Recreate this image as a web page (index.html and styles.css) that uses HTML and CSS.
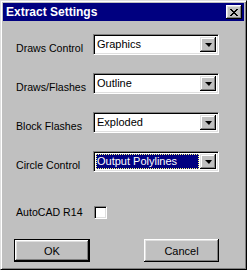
FILE: index.html
```html
<!DOCTYPE html>
<html>
<head>
    <title>Extract Settings</title>
    <link rel="stylesheet" href="styles.css">
</head>
<body>
    <div class="window">
        <div class="titlebar">
            <span class="title">Extract Settings</span>
            <div class="close">
                <svg width="8" height="7" viewBox="0 0 8 7">
                    <path d="M0 0h2v1h1v1h2v-1h1v-1h2v1h-1v1h-1v1h-1v1h1v1h1v1h1v1h-2v-1h-1v-1h-2v1h-1v1h-2v-1h1v-1h1v-1h1v-1h-1v-1h-1v-1h-1z" fill="#000"/>
                </svg>
            </div>
        </div>

        <div class="content">
            <div class="field">
                <span class="label">Draws Control</span>
                <div class="combo">
                    <div class="combo-value">Graphics</div>
                    <div class="combo-btn"><span class="arrow"></span></div>
                </div>
            </div>

            <div class="field">
                <span class="label">Draws/Flashes</span>
                <div class="combo">
                    <div class="combo-value">Outline</div>
                    <div class="combo-btn"><span class="arrow"></span></div>
                </div>
            </div>

            <div class="field">
                <span class="label">Block Flashes</span>
                <div class="combo">
                    <div class="combo-value">Exploded</div>
                    <div class="combo-btn"><span class="arrow"></span></div>
                </div>
            </div>

            <div class="field">
                <span class="label">Circle Control</span>
                <div class="combo">
                    <div class="combo-value focused">Output Polylines</div>
                    <div class="combo-btn"><span class="arrow"></span></div>
                </div>
            </div>

            <div class="check-row">
                <span class="label">AutoCAD R14</span>
                <span class="checkbox"></span>
            </div>

            <div class="buttons">
                <div class="btn default">OK</div>
                <div class="btn">Cancel</div>
            </div>
        </div>
    </div>
</body>
</html>
```

FILE: styles.css
```css
* {
    box-sizing: border-box;
}

body {
    margin: 0;
    font-family: 'Liberation Sans', Arial, sans-serif;
    font-size: 11px;
    color: #000;
    background: #c0c0c0;
}

.window {
    width: 247px;
    height: 270px;
    padding: 2px;
    background: #c0c0c0;
    border: 1px solid;
    border-color: #dfdfdf #000 #000 #dfdfdf;
    box-shadow: inset 1px 1px #fff, inset -1px -1px #808080;
}

.titlebar {
    height: 18px;
    background: #000080;
    display: flex;
    align-items: center;
    justify-content: space-between;
    padding: 0 2px 0 3px;
}

.title {
    color: #fff;
    font-weight: bold;
    font-size: 12px;
    line-height: 14px;
}

.close {
    width: 16px;
    height: 14px;
    background: #c0c0c0;
    display: flex;
    align-items: center;
    justify-content: center;
    box-shadow: inset -1px -1px #000, inset 1px 1px #fff, inset -2px -2px #808080, inset 2px 2px #dfdfdf;
}

.close svg {
    display: block;
    margin: 0 0 0 -1px;
}

.content {
    padding: 13px 0 0 11px;
}

.field {
    display: grid;
    grid-template-columns: 79px 126px;
    align-items: end;
    margin-bottom: 18px;
}

.label {
    padding-left: 2px;
    line-height: 13px;
    font-size: 10.6px;
    white-space: nowrap;
}

.combo {
    height: 21px;
    background: #fff;
    border: 1px solid;
    border-color: #808080 #fff #fff #808080;
    box-shadow: inset 1px 1px #000, inset -1px -1px #dfdfdf;
    padding: 2px;
    display: flex;
}

.combo-value {
    flex: 1;
    line-height: 13px;
    padding: 1px 0 0 1px;
    margin: 0 1px 0 0;
    white-space: nowrap;
}

.combo-value.focused {
    background: #000080;
    color: #fff;
    border: 1px dotted #ffff80;
    padding: 0;
}

.combo-btn {
    width: 16px;
    height: 15px;
    background: #c0c0c0;
    display: flex;
    align-items: center;
    justify-content: center;
    box-shadow: inset -1px -1px #000, inset 1px 1px #dfdfdf, inset -2px -2px #808080, inset 2px 2px #fff;
}

.arrow {
    width: 0;
    height: 0;
    border-left: 4px solid transparent;
    border-right: 3px solid transparent;
    border-top: 4px solid #000;
    margin-top: 1px;
}

.check-row {
    display: grid;
    grid-template-columns: 80px 13px;
    align-items: center;
    margin-top: 33px;
}

.checkbox {
    width: 13px;
    height: 13px;
    background: #fff;
    border: 1px solid;
    border-color: #808080 #fff #fff #808080;
    box-shadow: inset 1px 1px #000, inset -1px -1px #dfdfdf;
    margin-top: 1px;
}

.buttons {
    display: flex;
    gap: 54px;
    margin-top: 20px;
}

.btn {
    width: 75px;
    height: 23px;
    display: flex;
    align-items: center;
    justify-content: center;
    background: #c0c0c0;
    box-shadow: inset -1px -1px #000, inset 1px 1px #fff, inset -2px -2px #808080, inset 2px 2px #dfdfdf;
}

.btn.default {
    width: 76px;
    border: 1px solid #000;
}
```
